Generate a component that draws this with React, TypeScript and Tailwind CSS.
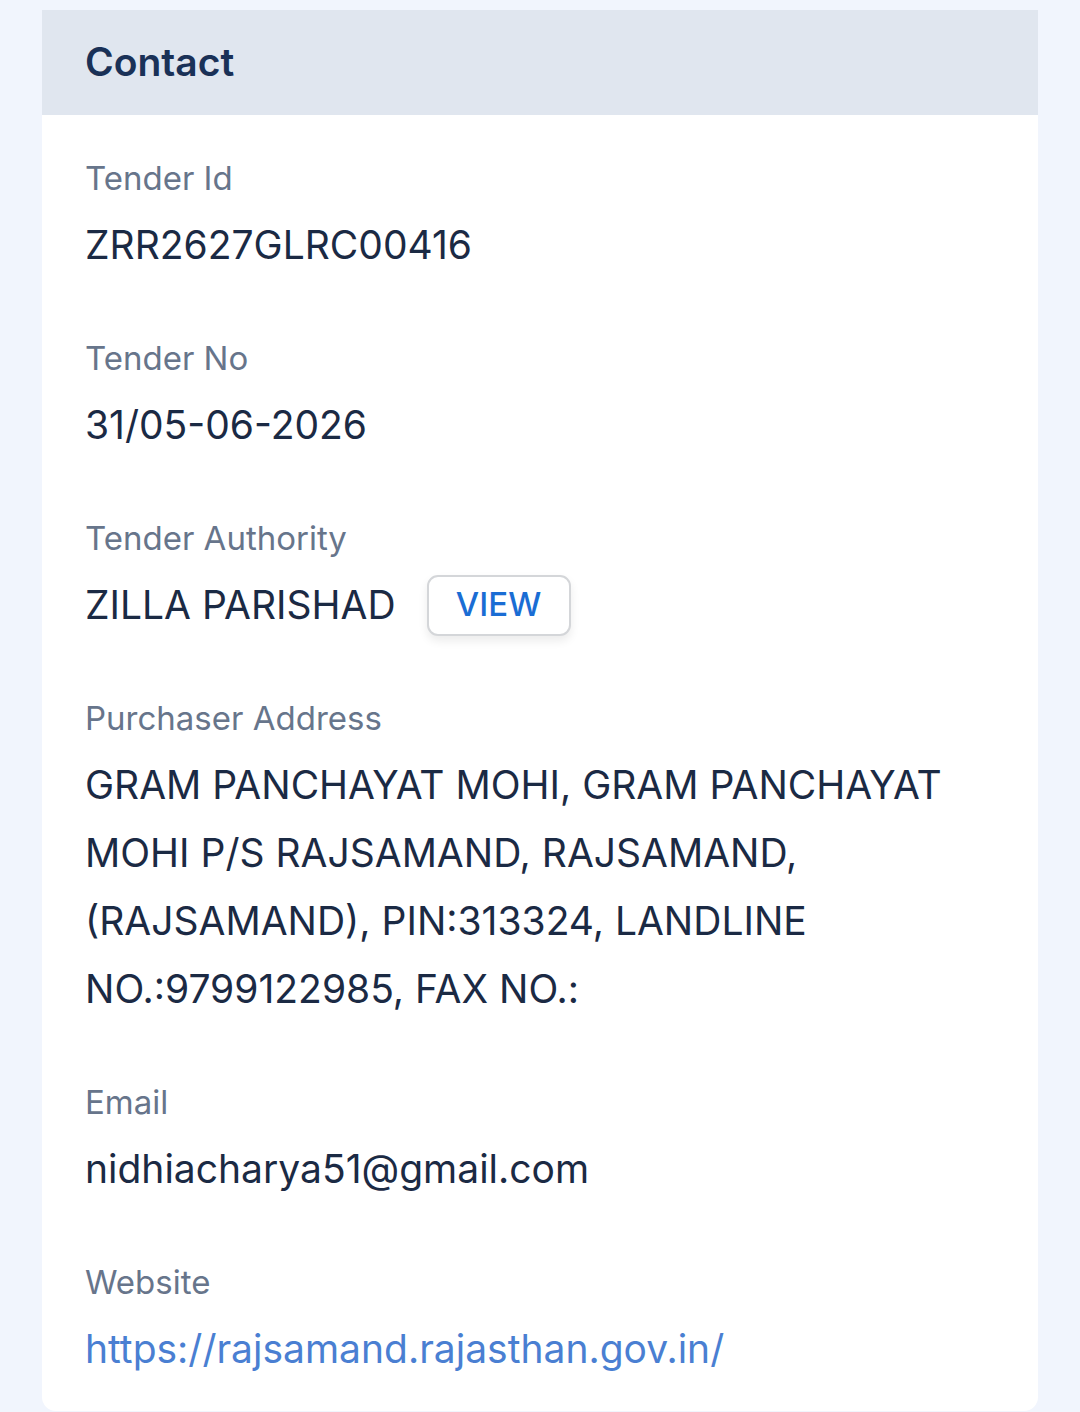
import React from 'react'

interface Field {
  label: string
  value: string
  link?: boolean
  view?: boolean
}

const fields: Field[] = [
  { label: 'Tender Id', value: 'ZRR2627GLRC00416' },
  { label: 'Tender No', value: '31/05-06-2026' },
  { label: 'Tender Authority', value: 'ZILLA PARISHAD', view: true },
  {
    label: 'Purchaser Address',
    value:
      'GRAM PANCHAYAT MOHI, GRAM PANCHAYAT MOHI P/S RAJSAMAND, RAJSAMAND, (RAJSAMAND), PIN:313324, LANDLINE NO.:9799122985, FAX NO.:',
  },
  { label: 'Email', value: 'nidhiacharya51@gmail.com' },
  { label: 'Website', value: 'https://rajsamand.rajasthan.gov.in/', link: true },
]

export default function App() {
  return (
    <div className="min-h-[1412px] bg-[#f1f5fd] px-[42px] pt-[10px] font-['Inter',sans-serif]">
      <div className="overflow-hidden rounded-b-[14px] bg-white">
        <div className="flex h-[105px] items-center bg-[#e0e6ef] px-[43px]">
          <h2 className="text-[39px] font-semibold text-[#1a3157]">Contact</h2>
        </div>

        <div className="flex flex-col gap-[57px] px-[43px] pt-[41px] pb-[28px]">
          {fields.map((f) => (
            <div key={f.label}>
              <p className="mb-[11px] text-[33px] leading-[44px] text-[#67758b]">{f.label}</p>
              {f.view ? (
                <div className="flex items-center gap-[31px]">
                  <p className="text-[39px] leading-[68px] text-[#1b2a44]">{f.value}</p>
                  <button className="h-[61px] w-[144px] rounded-[11px] border-2 border-[#d4d6d9] bg-white text-[33px] font-medium text-[#1a6dd4] shadow-[0_5px_10px_rgba(0,0,0,0.08)]">
                    VIEW
                  </button>
                </div>
              ) : (
                <p
                  className={
                    f.link
                      ? 'text-[39px] leading-[68px] text-[#4a7fd2]'
                      : 'max-w-[900px] text-[39px] leading-[68px] text-[#1b2a44]'
                  }
                >
                  {f.value}
                </p>
              )}
            </div>
          ))}
        </div>
      </div>
    </div>
  )
}
